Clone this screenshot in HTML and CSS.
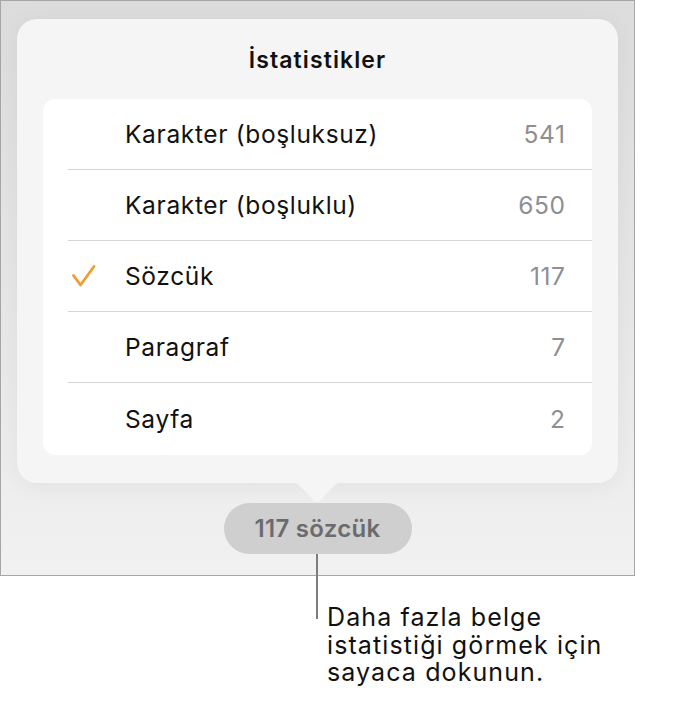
FILE: index.html
```html
<!DOCTYPE html>
<html lang="tr">
<head>
<meta charset="utf-8">
<link rel="stylesheet" href="styles.css">
</head>
<body>
<div class="page">
  <div class="frame">
    <div class="popover">
      <div class="title">İstatistikler</div>
      <div class="card">
        <div class="row"><span class="check"></span><span class="label">Karakter (boşluksuz)</span><span class="value">541</span></div>
        <div class="row"><span class="check"></span><span class="label">Karakter (boşluklu)</span><span class="value">650</span></div>
        <div class="row"><span class="check"><svg width="26" height="24" viewBox="0 0 26 24"><path d="M2.5 11.5 L9.5 21 L23 2.5" fill="none" stroke="#f29b30" stroke-width="2.8" stroke-linecap="round" stroke-linejoin="round"/></svg></span><span class="label">Sözcük</span><span class="value">117</span></div>
        <div class="row"><span class="check"></span><span class="label">Paragraf</span><span class="value">7</span></div>
        <div class="row"><span class="check"></span><span class="label">Sayfa</span><span class="value">2</span></div>
      </div>
      <svg class="arrow" width="60" height="21" viewBox="0 0 60 21"><path d="M0 0 C8 0 10 1 14 5 L27 19 C28.5 20.5 31.5 20.5 33 19 L46 5 C50 1 52 0 60 0 Z" fill="#f5f5f5"/></svg>
    </div>
    <div class="pill">117 sözcük</div>
  </div>
  <div class="leader"></div>
  <p class="callout">Daha fazla belge<br>istatistiği görmek için<br>sayaca dokunun.</p>
</div>
</body>
</html>
```
FILE: styles.css
```css
html, body {
  margin: 0;
  padding: 0;
  background: #ffffff;
}
.page {
  position: relative;
  width: 689px;
  height: 705px;
  font-family: Inter, "Noto Sans", sans-serif;
}
.frame {
  box-sizing: border-box;
  width: 635px;
  height: 576px;
  border: 1px solid #a6a6a6;
  background: linear-gradient(#dcdcdc, #f1f1f1);
  padding: 18px 16px 21px 16px;
  display: flex;
  flex-direction: column;
  align-items: center;
}
.popover {
  position: relative;
  box-sizing: border-box;
  width: 601px;
  height: 464px;
  background: #f5f5f5;
  border-radius: 20px;
  padding: 0 26px 28px 26px;
  box-shadow: 0 4px 24px rgba(0, 0, 0, 0.05);
}
.title {
  height: 80px;
  display: flex;
  align-items: center;
  justify-content: center;
  font-size: 23px;
  font-weight: 600;
  letter-spacing: 1.1px;
  color: #111111;
  padding-top: 2px;
  box-sizing: border-box;
}
.card {
  background: #ffffff;
  border-radius: 12px;
  height: 356px;
  overflow: hidden;
}
.row {
  margin-left: 25px;
  padding-right: 27px;
  height: 70px;
  border-bottom: 1px solid #d6d6d6;
  display: flex;
  align-items: center;
  font-size: 24.5px;
  letter-spacing: 0.65px;
}
.row:last-child {
  border-bottom: none;
  height: 72px;
}
.check {
  width: 57px;
  display: flex;
  align-items: center;
  padding-left: 3px;
  box-sizing: border-box;
}
.check svg {
  display: block;
}
.label {
  flex: 1;
  color: #111111;
}
.value {
  color: #8e8e93;
  margin-right: -0.65px;
}
.arrow {
  position: absolute;
  left: 270px;
  bottom: -20px;
}
.pill {
  margin-top: 20px;
  width: 188px;
  height: 51px;
  border-radius: 26px;
  background: #cfcfcf;
  color: #6b6b6e;
  font-size: 24px;
  font-weight: 600;
  letter-spacing: 0.3px;
  display: flex;
  align-items: center;
  justify-content: center;
}
.leader {
  position: absolute;
  left: 316px;
  top: 554px;
  width: 2px;
  height: 65px;
  background: #7d7d7d;
}
.callout {
  margin: 28px 0 0 327px;
  font-size: 25px;
  line-height: 27.5px;
  letter-spacing: 1.1px;
  color: #111111;
}
```
